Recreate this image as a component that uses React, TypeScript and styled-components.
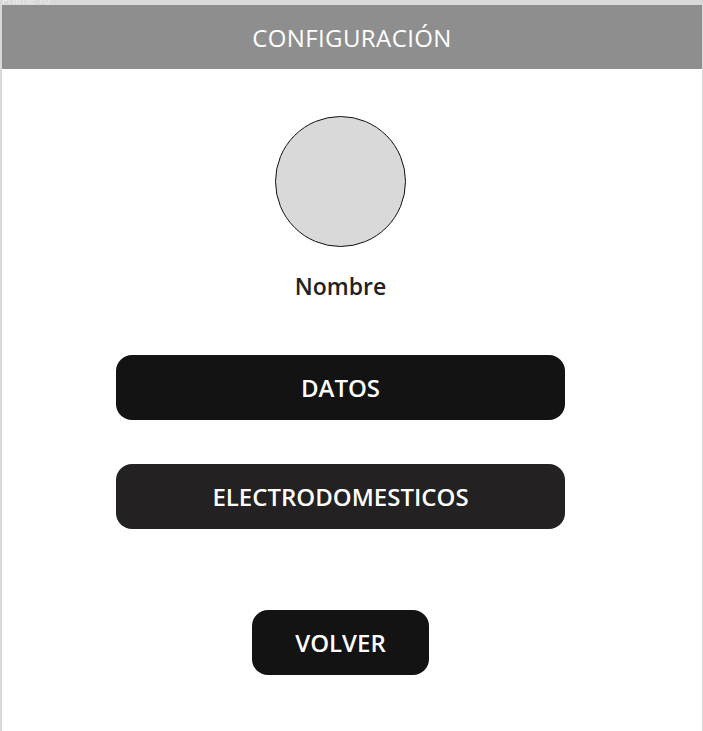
import React from 'react';
import styled, { createGlobalStyle } from 'styled-components';

const GlobalStyle = createGlobalStyle`
  html, body {
    margin: 0;
    padding: 0;
    background: #d9d9d9;
    font-family: 'Open Sans', 'Noto Sans', sans-serif;
  }
`;

const Page = styled.div`
  display: flex;
  flex-direction: column;
  height: 731px;
  overflow: hidden;
`;

const FrameLabel = styled.div`
  height: 5px;
  overflow: hidden;
  padding-left: 2px;
  font-size: 11px;
  line-height: 11px;
  color: #ececec;

  span {
    display: block;
    margin-top: -6px;
  }
`;

const Frame = styled.div`
  flex: 1;
  margin: 0 1px 0 2px;
  background: #ffffff;
  display: flex;
  flex-direction: column;
`;

const Header = styled.header`
  height: 64px;
  background: #8e8e8e;
  display: flex;
  align-items: center;
  justify-content: center;
`;

const Title = styled.h1`
  margin: 0;
  color: #ffffff;
  font-size: 24px;
  font-weight: 400;
  letter-spacing: 0.4px;
`;

const Content = styled.main`
  width: 449px;
  margin-left: 114px;
  display: flex;
  flex-direction: column;
  align-items: center;
`;

const Avatar = styled.div`
  margin-top: 47px;
  width: 129px;
  height: 129px;
  border-radius: 50%;
  background: #d9d9d9;
  border: 1px solid #111;
`;

const Name = styled.div`
  margin-top: 24px;
  line-height: 30px;
  font-size: 23px;
  font-weight: 600;
  color: #222;
`;

const Button = styled.button<{ $width?: number; $tone?: string; $gap: number }>`
  margin-top: ${(p) => p.$gap}px;
  width: ${(p) => (p.$width ? `${p.$width}px` : '100%')};
  height: 65px;
  border: none;
  border-radius: 16px;
  background: ${(p) => p.$tone || '#131313'};
  color: #ffffff;
  font-family: inherit;
  font-size: 24px;
  font-weight: 600;
  display: flex;
  align-items: center;
  justify-content: center;
`;

export default function App() {
  return (
    <Page>
      <GlobalStyle />
      <FrameLabel>
        <span>Frame 16</span>
      </FrameLabel>
      <Frame>
        <Header>
          <Title>CONFIGURACIÓN</Title>
        </Header>
        <Content>
          <Avatar />
          <Name>Nombre</Name>
          <Button $gap={54}>DATOS</Button>
          <Button $gap={44} $tone="#232122">ELECTRODOMESTICOS</Button>
          <Button $gap={81} $width={177}>VOLVER</Button>
        </Content>
      </Frame>
    </Page>
  );
}
